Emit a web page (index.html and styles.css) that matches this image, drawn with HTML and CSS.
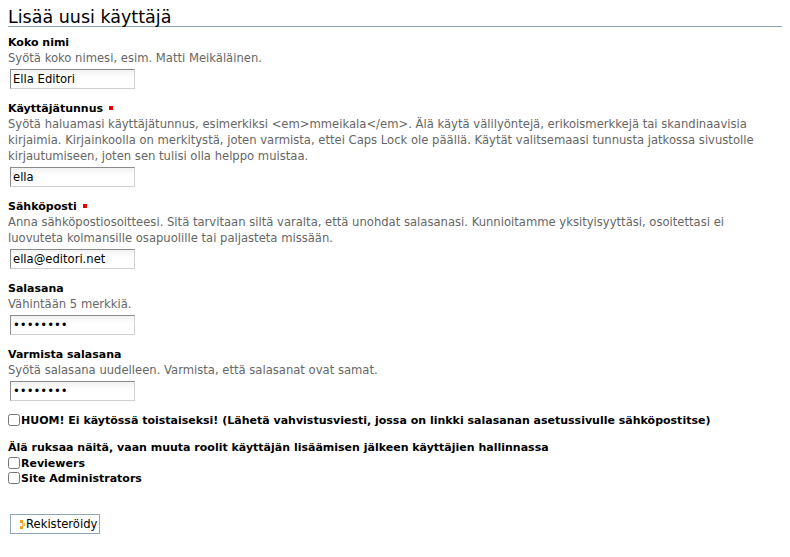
FILE: index.html
```html
<!DOCTYPE html>
<html lang="fi">
<head>
<meta charset="utf-8">
<title>Lisää uusi käyttäjä</title>
<link rel="stylesheet" href="styles.css">
</head>
<body>
<h1 class="title">Lisää uusi käyttäjä</h1>
<form class="form">
  <div class="field">
    <label class="label">Koko nimi</label>
    <div class="help">Syötä koko nimesi, esim. Matti Meikäläinen.</div>
    <input class="text" type="text" value="Ella Editori">
  </div>
  <div class="field">
    <label class="label">Käyttäjätunnus <span class="req"></span></label>
    <div class="help">Syötä haluamasi käyttäjätunnus, esimerkiksi &lt;em&gt;mmeikala&lt;/em&gt;. Älä käytä välilyöntejä, erikoismerkkejä tai skandinaavisia kirjaimia. Kirjainkoolla on merkitystä, joten varmista, ettei Caps Lock ole päällä. Käytät valitsemaasi tunnusta jatkossa sivustolle kirjautumiseen, joten sen tulisi olla helppo muistaa.</div>
    <input class="text" type="text" value="ella">
  </div>
  <div class="field">
    <label class="label">Sähköposti <span class="req"></span></label>
    <div class="help">Anna sähköpostiosoitteesi. Sitä tarvitaan siltä varalta, että unohdat salasanasi. Kunnioitamme yksityisyyttäsi, osoitettasi ei luovuteta kolmansille osapuolille tai paljasteta missään.</div>
    <input class="text" type="text" value="ella@editori.net">
  </div>
  <div class="field">
    <label class="label">Salasana</label>
    <div class="help">Vähintään 5 merkkiä.</div>
    <input class="text" type="password" value="salasana">
  </div>
  <div class="field">
    <label class="label">Varmista salasana</label>
    <div class="help">Syötä salasana uudelleen. Varmista, että salasanat ovat samat.</div>
    <input class="text" type="password" value="salasana">
  </div>
  <div class="check-row"><input class="check" type="checkbox">HUOM! Ei käytössä toistaiseksi! (Lähetä vahvistusviesti, jossa on linkki salasanan asetussivulle sähköpostitse)</div>
  <div class="roles">
    <div class="roles-note">Älä ruksaa näitä, vaan muuta roolit käyttäjän lisäämisen jälkeen käyttäjien hallinnassa</div>
    <div class="role"><input class="check" type="checkbox">Reviewers</div>
    <div class="role"><input class="check" type="checkbox">Site Administrators</div>
  </div>
  <button class="submit" type="button"><svg class="icon" width="5" height="9" viewBox="0 0 5 9"><rect x="0" y="0" width="3" height="3" fill="#f0a020"/><rect x="2" y="3" width="3" height="3" fill="#f5c060"/><rect x="0" y="6" width="3" height="3" fill="#f0a020"/></svg>Rekisteröidy</button>
</form>
</body>
</html>
```
FILE: styles.css
```css
body {
  margin: 8px;
  font-family: "DejaVu Sans", sans-serif;
  font-size: 11.6px;
  color: #000;
  background: #fff;
}
.title {
  margin: 0;
  font-size: 17.5px;
  font-weight: normal;
  line-height: 18px;
  border-bottom: 1px solid #8fa3ae;
}
.form {
  display: flex;
  flex-direction: column;
  align-items: flex-start;
  padding-top: 8px;
}
.field {
  display: flex;
  flex-direction: column;
  align-items: flex-start;
  margin-bottom: 12px;
}
.label {
  font-weight: bold;
  font-size: 11px;
  line-height: 15px;
}
.req {
  display: inline-block;
  width: 4px;
  height: 4px;
  background: #e60000;
  vertical-align: 2px;
  margin-left: 2px;
}
.help {
  color: #666;
  line-height: 16px;
}
.text {
  margin: 3px 0 0 2px;
  width: 125px;
  height: 20px;
  box-sizing: border-box;
  padding: 1px 2px;
  border: 1px solid;
  border-color: #8a8a8a #cfcfcf #cfcfcf #8a8a8a;
  background: linear-gradient(#f2f2f2, #fff 45%);
  font-family: "DejaVu Sans", sans-serif;
  font-size: 11.6px;
  color: #000;
}
.check {
  margin: 0 1px 0 0;
  width: 12px;
  height: 12px;
  vertical-align: -2px;
}
.check-row {
  font-weight: bold;
  font-size: 11px;
  line-height: 16px;
}
.roles {
  margin-top: 11px;
  font-weight: bold;
  font-size: 11px;
  line-height: 15px;
}
.roles-note {
  line-height: 16px;
}
.submit {
  margin: 28px 0 0 2px;
  height: 20px;
  padding: 0 2px 0 9px;
  border: 1px solid #8fa6b6;
  background: #fff;
  font-family: "DejaVu Sans", sans-serif;
  font-size: 11.6px;
  display: flex;
  align-items: center;
  gap: 1px;
  color: #000;
}
.icon {
  display: block;
}
```
